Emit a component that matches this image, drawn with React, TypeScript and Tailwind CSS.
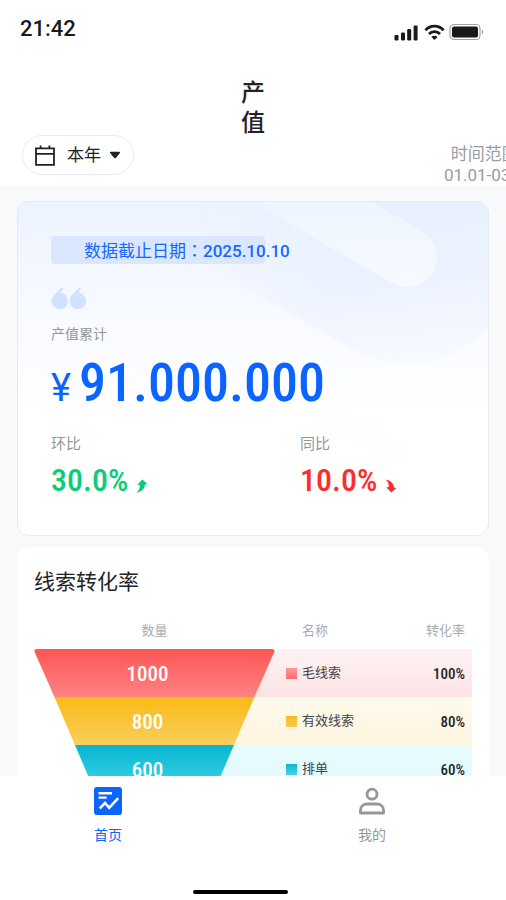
import React, { useState } from 'react';

interface FunnelStage {
  name: string;
  count: number;
  rate: string;
  from: string;
  to: string;
  rowClass: string;
  swatchClass: string;
  tint: [string, string];
}

const stages: FunnelStage[] = [
  {
    name: '毛线索',
    count: 1000,
    rate: '100%',
    from: '#fe5656',
    to: '#fd8282',
    rowClass: 'bg-linear-to-b from-[#fff3f3] to-[#fde3e4]',
    swatchClass: 'bg-linear-to-b from-[#fd9a9a] to-[#fd6a6a]',
    tint: ['#fff3f3', '#fde3e4'],
  },
  {
    name: '有效线索',
    count: 800,
    rate: '80%',
    from: '#f9bb15',
    to: '#facd5e',
    rowClass: 'bg-linear-to-b from-[#fffaeb] to-[#fef5e0]',
    swatchClass: 'bg-linear-to-b from-[#f9bb1c] to-[#fbc950]',
    tint: ['#fffaeb', '#fef5e0'],
  },
  {
    name: '排单',
    count: 600,
    rate: '60%',
    from: '#08b4d0',
    to: '#40d8ea',
    rowClass: 'bg-linear-to-b from-[#e8fcff] to-[#e0f9fe]',
    swatchClass: 'bg-linear-to-b from-[#10b5d0] to-[#3fd6ea]',
    tint: ['#e8fcff', '#e0f9fe'],
  },
];

const NUM = "font-['Roboto_Condensed','Liberation_Sans_Narrow',Roboto,sans-serif]";

function StatusBar() {
  return (
    <div className="flex items-start justify-between pl-5 pr-[22px] pt-[15px] h-[62px]">
      <span className="text-[22px] leading-7 font-medium text-[#1a1a1a]">21:42</span>
      <div className="flex items-center gap-1 pt-2">
        <svg width="26" height="18" viewBox="0 0 26 18" fill="#1a1a1a">
          <rect x="0.5" y="12" width="4" height="5.5" rx="1.2" />
          <rect x="7" y="9.5" width="4" height="8" rx="1.2" />
          <rect x="13.2" y="6" width="4" height="11.5" rx="1.2" />
          <rect x="19.6" y="2.5" width="4" height="15" rx="1.2" />
        </svg>
        <svg width="21" height="18" viewBox="0 0 21 18" fill="none" stroke="#1a1a1a" strokeWidth="2.8">
          <path d="M1.4 7.2C6.4 1.8 14.6 1.8 19.6 7.2" />
          <path d="M5 11C8 7.8 13 7.8 16 11" />
          <path d="M10.5 17L7.4 13.9C9.2 12.2 11.8 12.2 13.6 13.9Z" fill="#1a1a1a" stroke="none" />
        </svg>
        <svg width="35" height="18" viewBox="0 0 35 18">
          <rect x="1" y="1.5" width="30" height="15" rx="4" fill="none" stroke="#a3a3a3" strokeWidth="1.2" />
          <rect x="3" y="3.6" width="26" height="10.8" rx="2" fill="#1a1a1a" />
          <path d="M32.8 6.6C34.8 7.4 34.8 10.6 32.8 11.4Z" fill="#a3a3a3" />
        </svg>
      </div>
    </div>
  );
}

function Header() {
  const [range, setRange] = useState('本年');

  return (
    <header className="bg-white overflow-hidden">
      <StatusBar />
      <h1 className="mx-auto mt-4 w-6 text-2xl leading-[30px] font-medium text-[#1f2329]">产值</h1>
      <div className="-mt-[3px] flex items-start justify-between pl-[22px]">
        <label className="flex items-center h-10 px-3 rounded-full border border-[#ebecee]">
          <svg width="20" height="21" viewBox="0 0 20 21" fill="none" stroke="#1f2329" strokeWidth="1.8">
            <path d="M1 3.4H19V19.8H1ZM1 8.8H19M5.6 0.4V3.4M14.4 0.4V3.4" />
          </svg>
          <select
            aria-label="时间"
            value={range}
            onChange={e => setRange(e.target.value)}
            className="appearance-none bg-transparent outline-none ml-3 mr-2 text-[17px] leading-6 text-[#1f2329]"
          >
            <option>本年</option>
            <option>本季</option>
            <option>本月</option>
          </select>
          <svg width="12" height="8" viewBox="0 0 12 8" fill="#1f2329">
            <path d="M2 0.8H10C11 0.8 11.3 1.6 10.7 2.3L7 6.8C6.4 7.5 5.6 7.5 5 6.8L1.3 2.3C0.7 1.6 1 0.8 2 0.8Z" />
          </svg>
        </label>
        <p className="-mr-7 mt-[9px] text-center whitespace-nowrap text-[17px] leading-[21px] text-[#989ca3]">
          时间范围:&nbsp;
          <br />
          01.01-03.31
        </p>
      </div>
    </header>
  );
}

function CardBackdrop() {
  return (
    <svg className="absolute right-0 top-0" width="472" height="335" viewBox="17 200 472 335" fill="none">
      <defs>
        <linearGradient id="band" gradientUnits="userSpaceOnUse" x1="380" y1="200" x2="400" y2="362">
          <stop offset="0" stopColor="#e7f0ff" />
          <stop offset="0.5" stopColor="#ecf2ff" />
          <stop offset="1" stopColor="#f7faff" />
        </linearGradient>
        <linearGradient id="bandFade" gradientUnits="userSpaceOnUse" x1="200" y1="230" x2="330" y2="230">
          <stop offset="0" stopColor="#fff" stopOpacity="0" />
          <stop offset="1" stopColor="#fff" />
        </linearGradient>
        <linearGradient id="pill" gradientUnits="userSpaceOnUse" x1="0" y1="200" x2="0" y2="285">
          <stop offset="0" stopColor="#eef5ff" />
          <stop offset="1" stopColor="#f6faff" />
        </linearGradient>
        <mask id="bandMask" maskUnits="userSpaceOnUse" x="17" y="200" width="472" height="335">
          <rect x="17" y="200" width="472" height="335" fill="url(#bandFade)" />
        </mask>
      </defs>
      <g mask="url(#bandMask)">
        <path d="M148 105L408 255" stroke="url(#band)" strokeWidth="214" strokeLinecap="round" />
      </g>
      <path d="M148 105L408 255" stroke="url(#pill)" strokeWidth="60" strokeLinecap="round" />
      <path d="M330 412L394 449" stroke="#fdfeff" strokeWidth="24" strokeLinecap="round" />
    </svg>
  );
}

function OutputCard() {
  return (
    <section className="relative overflow-hidden rounded-xl border border-[#e8eaee] bg-white bg-linear-to-b from-[#edf4ff] via-[#fbfcff] via-45% to-white to-65% px-[33px] pt-[34px] pb-[35px]">
      <CardBackdrop />
      <div className="relative">
        <div className="w-[214px] h-7 rounded bg-[#dae7fe] pl-[33px] whitespace-nowrap text-[17px] leading-7 text-[#1468ff]">
          数据截止日期<span className="font-['Noto_Sans_CJK_TC',sans-serif]">：</span>
          <span className="font-medium">2025.10.10</span>
        </div>

        <svg className="mt-[22px]" width="35" height="24" viewBox="0 0 35 24" fill="#d2e1fe">
          <path d="M10.8 1L12.2 2.4L9.4 6.8A8.2 8.2 0 1 1 3.6 8.6Z" />
          <path d="M28.8 1L30.2 2.4L27.4 6.8A8.2 8.2 0 1 1 21.6 8.6Z" />
        </svg>

        <p className="mt-[14px] text-sm leading-5 text-[#94979c]">产值累计</p>

        <div className="mt-[10px] flex items-baseline gap-2 leading-[58px] text-[#0b64ff]">
          <span className="text-[38px]">¥</span>
          <span className={`text-[54px] font-medium ${NUM}`}>91.000.000</span>
        </div>

        <div className="mt-[15px] grid grid-cols-[249px_1fr]">
          <div>
            <p className="text-[15px] leading-6 text-[#94979c]">环比</p>
            <div className={`mt-1 flex items-center gap-2 text-[32px] leading-10 font-medium text-[#09cd77] ${NUM}`}>
              30.0%
              <svg className="mt-3" width="12" height="14" viewBox="0 0 12 14" fill="currentColor">
                <path d="M6.4 0.6L11.6 5.2H9C9 9.4 5.6 12.8 0.6 13.6C3.2 11.4 4.2 8.8 3.6 5.8H1.2Z" />
              </svg>
            </div>
          </div>
          <div>
            <p className="text-[15px] leading-6 text-[#94979c]">同比</p>
            <div className={`mt-1 flex items-center gap-2 text-[32px] leading-10 font-medium text-[#ff2c2c] ${NUM}`}>
              10.0%
              <svg className="mt-3" width="12" height="14" viewBox="0 0 12 14" fill="currentColor">
                <path d="M6.4 13.4L11.6 8.8H9C9 4.6 5.6 1.2 0.6 0.4C3.2 2.6 4.2 5.2 3.6 8.2H1.2Z" />
              </svg>
            </div>
          </div>
        </div>
      </div>
    </section>
  );
}

// One slice of the funnel, each slice is 20 units narrower per side than the one above
function FunnelSlice({ stage, index }: { stage: FunnelStage; index: number }) {
  const top = index * 20.4;
  const bottom = top + 20.4;
  const shape =
    index === 0
      ? 'M3 0H237Q240.6 0 239.4 3L219.6 48H20.4L0.6 3Q-0.6 0 3 0Z'
      : `M${top} 0H${240 - top}L${240 - bottom} 48H${bottom}Z`;

  return (
    <svg className="absolute inset-0 w-full h-full" viewBox="0 0 240 48" preserveAspectRatio="none">
      <defs>
        <linearGradient id={`slice-${index}`} x1="0" y1="0" x2="0" y2="1">
          <stop offset="0" stopColor={stage.from} />
          <stop offset="1" stopColor={stage.to} />
        </linearGradient>
        <linearGradient id={`tint-${index}`} x1="0" y1="0" x2="0" y2="1">
          <stop offset="0" stopColor={stage.tint[0]} />
          <stop offset="1" stopColor={stage.tint[1]} />
        </linearGradient>
      </defs>
      <rect x="120" width="121" height="48" fill={`url(#tint-${index})`} />
      <path d={shape} fill={`url(#slice-${index})`} />
    </svg>
  );
}

function FunnelCard() {
  return (
    <section className="rounded-xl bg-white px-[17px] pt-[21px] pb-6">
      <h2 className="text-[21px] leading-7 text-[#1f2329]">线索转化率</h2>
      <table className="mt-[25px] w-full table-fixed border-collapse">
        <thead>
          <tr className="text-[13px] leading-5 text-[#a9acb1]">
            <th className="w-[55%] pb-2 font-normal text-center">数量</th>
            <th className="pb-2 pl-[27px] font-normal text-left">名称</th>
            <th className="w-[16%] pb-2 pr-[7px] font-normal text-right">转化率</th>
          </tr>
        </thead>
        <tbody>
          {stages.map((stage, index) => (
            <tr key={stage.name} className="h-12">
              <td className="relative p-0 pt-1 pr-[14px] text-center">
                <FunnelSlice stage={stage} index={index} />
                <span className={`relative text-[21px] leading-6 font-medium text-white ${NUM}`}>{stage.count}</span>
              </td>
              <td className={`p-0 pl-[11px] ${stage.rowClass}`}>
                <div className="flex items-center gap-[5px] text-[13px] leading-5 text-[#3f4248]">
                  <span className={`w-[11px] h-[11px] ${stage.swatchClass}`} />
                  {stage.name}
                </div>
              </td>
              <td className={`p-0 pt-0.5 pr-[7px] text-right text-[15px] leading-5 font-medium text-[#1f2329] ${stage.rowClass} ${NUM}`}>
                {stage.rate}
              </td>
            </tr>
          ))}
        </tbody>
      </table>
    </section>
  );
}

function TabBar() {
  return (
    <nav className="bg-white shrink-0">
      <div className="flex justify-between pl-[93px] pr-[119px] pt-[10px]">
        <a href="#home" className="flex flex-col items-center gap-[9px] text-[14px] leading-5 text-[#0b64ff]">
          <svg width="30" height="30" viewBox="0 0 30 30" fill="none">
            <rect x="1" y="1" width="28" height="28" rx="3" fill="#0b64ff" />
            <path d="M5.5 7.2H19M5.5 11.6H13.6" stroke="#fff" strokeWidth="2.4" />
            <path d="M6.8 22.4L12 17L16.2 21.8L25.2 12.2" stroke="#fff" strokeWidth="2.6" />
          </svg>
          首页
        </a>
        <a href="#mine" className="flex flex-col items-center gap-[9px] text-[14px] leading-5 text-[#94979c]">
          <svg width="30" height="30" viewBox="0 0 30 30" fill="none" stroke="#94979c" strokeWidth="2.8">
            <circle cx="15" cy="8.2" r="5" />
            <path d="M3.4 27V24.6C3.4 20.6 6.4 18 10.2 18H19.8C23.6 18 26.6 20.6 26.6 24.6V27Z" strokeLinejoin="round" />
          </svg>
          我的
        </a>
      </div>
      <div className="pr-[25px] pt-[45px] pb-[6px]">
        <div className="mx-auto w-[95px] h-1 rounded-full bg-black" />
      </div>
    </nav>
  );
}

export default function App() {
  return (
    <div className="h-screen flex flex-col overflow-hidden bg-[#f7f9fb] font-[Roboto,'Noto_Sans_CJK_SC',sans-serif]">
      <Header />
      <main className="flex-1 min-h-0 overflow-hidden px-[17px] pt-[15px] space-y-[11px]">
        <OutputCard />
        <FunnelCard />
      </main>
      <TabBar />
    </div>
  );
}
